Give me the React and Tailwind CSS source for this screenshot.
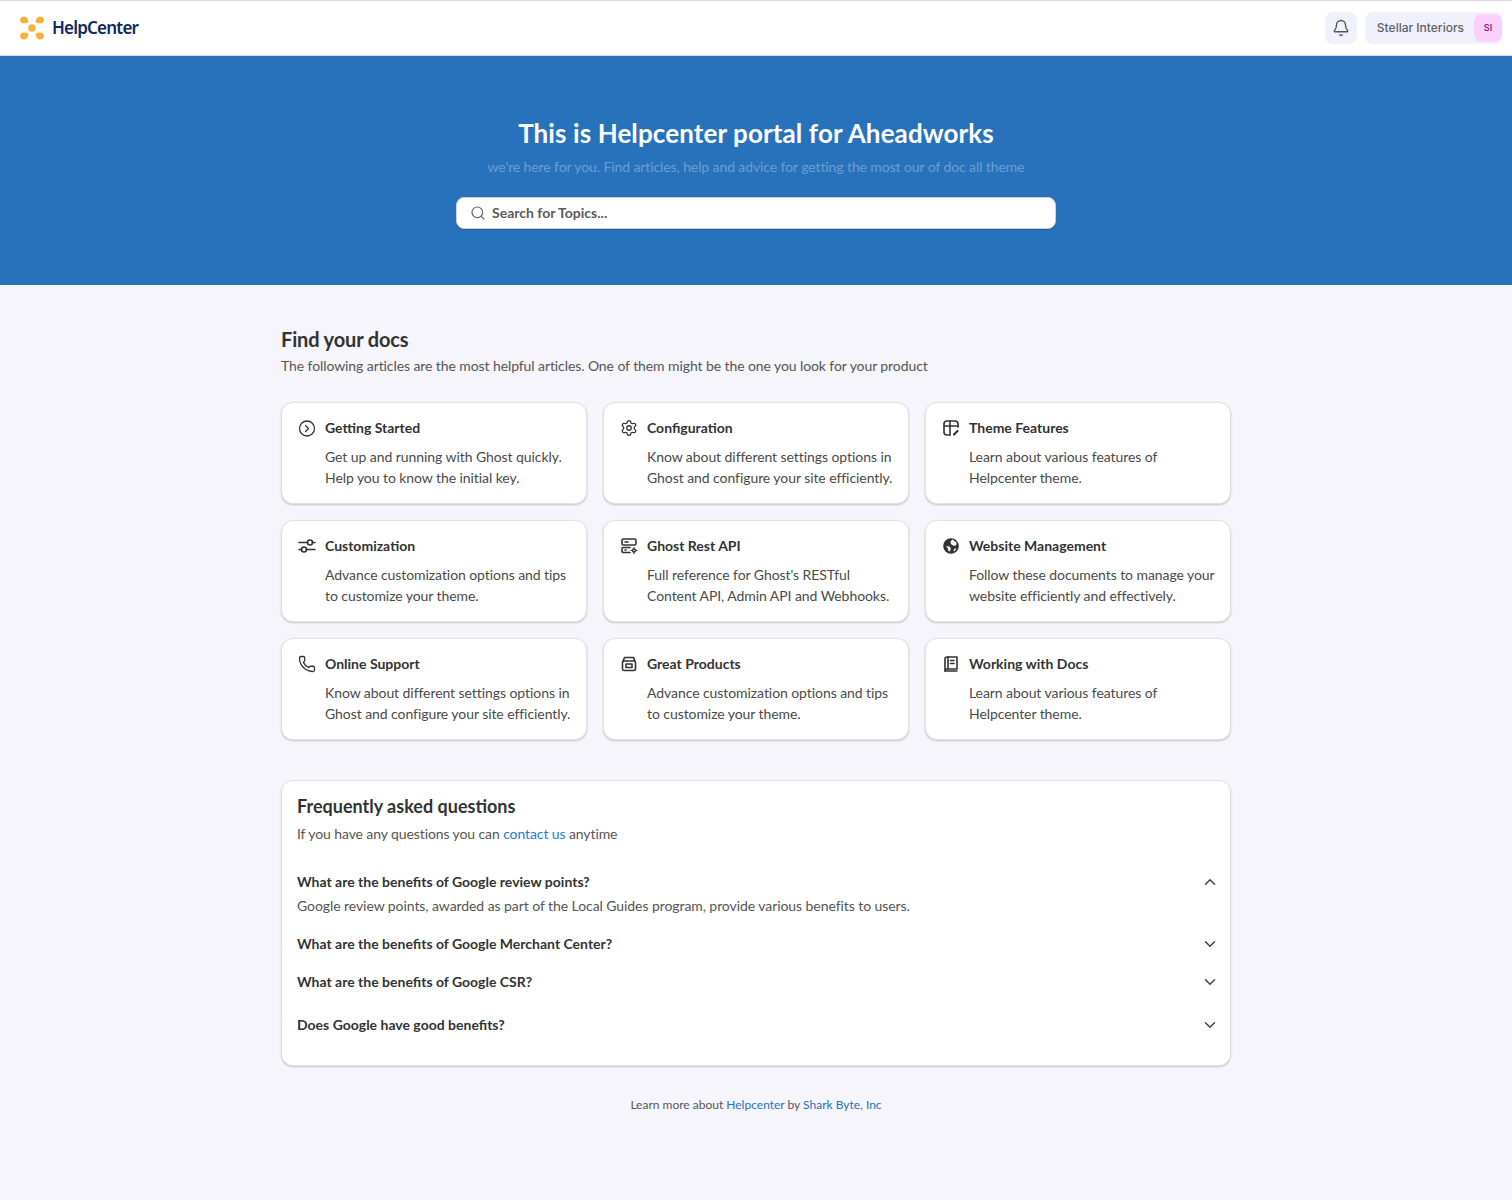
import React from "react";
import { Bell, ChevronDown, ChevronUp, CircleChevronRight, Search, Settings, Phone } from "lucide-react";

const IconBase = ({ children }) => (
  <svg width="18" height="18" viewBox="0 0 18 18" fill="none" stroke="currentColor" strokeWidth="1.6" strokeLinecap="round" strokeLinejoin="round">
    {children}
  </svg>
);

const ThemeIcon = () => (
  <IconBase>
    <path d="M16 8V5a3 3 0 0 0-3-3H5a3 3 0 0 0-3 3v8a3 3 0 0 0 3 3h3" />
    <path d="M2 7h14M8 2v14" />
    <path d="M12 15.500l3.500-3.500" strokeWidth="2.200" />
  </IconBase>
);

const SlidersIcon = () => (
  <IconBase>
    <path d="M1 5.500h8.500M14.500 5.500H17M1 12.500h2.500M8.500 12.500H17" />
    <circle cx="12" cy="5.500" r="2.500" />
    <circle cx="6" cy="12.500" r="2.500" />
  </IconBase>
);

const ServerIcon = () => (
  <IconBase>
    <rect x="2" y="2" width="14" height="6" rx="1.500" />
    <path d="M10 10.500H3.500A1.500 1.500 0 0 0 2 12v2a1.500 1.500 0 0 0 1.500 1.500H10" />
    <path d="M5 5h3M5 13h1" />
    <circle cx="14" cy="13.500" r="1.500" strokeWidth="1.400" />
    <path d="M14 10.500v1M14 15.500v1M11 13.500h1M16 13.500h1" strokeWidth="1.200" />
  </IconBase>
);

const GlobeIcon = () => (
  <svg width="18" height="18" viewBox="0 0 18 18">
    <circle cx="9" cy="9" r="7.800" fill="#333" />
    <path fill="#fff" d="M10.500 2.500 14.500 5.500 14 8.500 11.500 8.800 9 7 8.500 4.500Z" />
    <path fill="#fff" d="M4 9 7.500 9.500 9 11.500 7.500 14.500 6.200 13.500 5.800 11Z" />
    <path fill="#fff" d="M12.500 11.500 14.500 11.800 12 14.500 11.500 13.500Z" />
  </svg>
);

const BagIcon = () => (
  <IconBase>
    <path d="M3 6.500 4.500 2.500h9L15 6.500" />
    <rect x="2.500" y="6" width="13" height="9.500" rx="1.500" />
    <rect x="6" y="9" width="6" height="3.500" />
  </IconBase>
);

const BookIcon = () => (
  <IconBase>
    <path d="M5 2h10v12H5a2 2 0 0 0-2 2V4a2 2 0 0 1 2-2Z" />
    <path d="M3 16h12M8.500 5.500h3.500M8.500 8.500h3.500" />
    <path d="M6 2v12" />
  </IconBase>
);

const Logo = () => (
  <svg width="24" height="24" viewBox="0 0 24 24" fill="#fbb03b">
    <circle cx="12" cy="12" r="3.800" />
    <path d="M0 4.500A4 4 0 0 1 4 .500C6.500.500 8 2.500 8.500 6 5.500 8.500 0 7.500 0 4.500Z" />
    <path d="M24 4.500A4 4 0 0 0 20 .500C17.500.500 16 2.500 15.500 6 18.500 8.500 24 7.500 24 4.500Z" />
    <path d="M0 19.500A4 4 0 0 0 4 23.500C6.500 23.500 8 21.500 8.500 18 5.500 15.500 0 16.500 0 19.500Z" />
    <path d="M24 19.500a4 4 0 0 1-4 4c-2.500 0-4-2-4.500-5.500 3-2.500 8.500-1.500 8.500 1.500Z" />
  </svg>
);

const docs = [
  { title: "Getting Started", icon: <CircleChevronRight size={19} strokeWidth={1.7} />, lines: ["Get up and running with Ghost quickly.", "Help you to know the initial key."] },
  { title: "Configuration", icon: <Settings size={18} strokeWidth={1.7} />, lines: ["Know about different settings options in", "Ghost and configure your site efficiently."] },
  { title: "Theme Features", icon: <ThemeIcon />, lines: ["Learn about various features of", "Helpcenter theme."] },
  { title: "Customization", icon: <SlidersIcon />, lines: ["Advance customization options and tips", "to customize your theme."] },
  { title: "Ghost Rest API", icon: <ServerIcon />, lines: ["Full reference for Ghost's RESTful", "Content API, Admin API and Webhooks."] },
  { title: "Website Management", icon: <GlobeIcon />, lines: ["Follow these documents to manage your", "website efficiently and effectively."] },
  { title: "Online Support", icon: <Phone size={18} strokeWidth={1.7} />, lines: ["Know about different settings options in", "Ghost and configure your site efficiently."] },
  { title: "Great Products", icon: <BagIcon />, lines: ["Advance customization options and tips", "to customize your theme."] },
  { title: "Working with Docs", icon: <BookIcon />, lines: ["Learn about various features of", "Helpcenter theme."] },
];

const DocCard = ({ doc }) => (
  <div className="h-[102px] rounded-xl border border-[#e2e2e6] bg-white pl-4 pr-2 pt-[15px] shadow-[0_1px_2px_rgba(0,0,0,0.2)]">
    <div className="flex h-5 items-center gap-[9px] text-[#333]">
      <span className="flex w-[18px] justify-center">{doc.icon}</span>
      <h3 className="text-sm font-bold text-[#333]">{doc.title}</h3>
    </div>
    <div className="mt-2 pl-[27px] text-sm leading-[21px] tracking-[-0.07px] text-[#4a4a4a]">
      {doc.lines.map((l) => (
        <p key={l} className="whitespace-nowrap">{l}</p>
      ))}
    </div>
  </div>
);

const FaqRow = ({ q, open, className }) => (
  <div className={`flex items-center justify-between pr-[11px] ${className}`}>
    <span className="text-sm font-bold text-[#333]">{q}</span>
    {open ? <ChevronUp size={18} strokeWidth={2} className="text-[#444]" /> : <ChevronDown size={18} strokeWidth={2} className="text-[#444]" />}
  </div>
);

export default function App() {
  return (
    <div className="min-h-[1200px] bg-[#f5f5fb] font-['Lato',sans-serif]">
      <header className="flex h-14 items-center justify-between border-y border-[#d8d8d8] bg-white pl-5 pr-[9px]">
        <div className="flex items-center gap-2">
          <Logo />
          <span className="font-['Noto_Sans',sans-serif] text-[17px] font-semibold tracking-[-0.8px] text-[#0f2a5f]">HelpCenter</span>
        </div>
        <div className="flex items-center gap-2">
          <button className="flex h-8 w-8 items-center justify-center rounded-lg bg-[#f0f1fb] text-[#555]">
            <Bell size={18} strokeWidth={1.8} />
          </button>
          <div className="flex h-8 items-center gap-[10px] rounded-lg bg-[#f0f1fb] pl-3 pr-px font-['Inter',sans-serif]">
            <span className="text-xs font-medium text-[#5f5f68]">Stellar Interiors</span>
            <span className="flex h-7 w-7 items-center justify-center rounded-lg bg-[#fbd0fa] text-[9px] font-semibold text-[#8a1f8a]">SI</span>
          </div>
        </div>
      </header>

      <section className="flex h-[229px] flex-col items-center bg-[#2872bb] pt-[59px]">
        <h1 className="text-[26px] font-bold leading-9 tracking-[0.1px] text-white">This is Helpcenter portal for Aheadworks</h1>
        <p className="mt-[6px] text-sm leading-5 tracking-[-0.1px] text-[#6c9fd3]">we're here for you. Find articles, help and advice for getting the most our of doc all theme</p>
        <div className="mt-5 flex h-8 w-[600px] items-center gap-[6px] rounded-lg border border-[#d0d0d0] bg-white pl-[13px] shadow-[0_1px_1px_rgba(0,0,0,0.15)]">
          <Search size={16} strokeWidth={1.8} className="text-[#666]" />
          <span className="text-sm font-bold text-[#5b5b5b]">Search for Topics...</span>
        </div>
      </section>

      <main className="mx-auto w-[950px] pt-10">
        <h2 className="text-xl font-bold leading-7 tracking-[-0.15px] text-[#333]">Find your docs</h2>
        <p className="mt-[3px] text-sm leading-5 tracking-[-0.09px] text-[#555]">The following articles are the most helpful articles. One of them might be the one you look for your product</p>

        <div className="mt-[26px] grid grid-cols-3 gap-4">
          {docs.map((d) => (
            <DocCard key={d.title} doc={d} />
          ))}
        </div>

        <section className="mt-10 h-[286px] rounded-xl border border-[#e2e2e6] bg-white pl-[15px] pt-[11px] shadow-[0_1px_2px_rgba(0,0,0,0.2)]">
          <h2 className="text-lg font-bold leading-7 text-[#333]">Frequently asked questions</h2>
          <p className="mt-1 text-sm leading-5 tracking-[-0.1px] text-[#555]">
            If you have any questions you can <span className="text-[#1c7ed6]">contact us</span> anytime
          </p>
          <FaqRow q="What are the benefits of Google review points?" open className="mt-7 h-5" />
          <p className="mt-1 text-sm leading-5 tracking-[-0.07px] text-[#555]">Google review points, awarded as part of the Local Guides program, provide various benefits to users.</p>
          <FaqRow q="What are the benefits of Google Merchant Center?" className="mt-[18px] h-5" />
          <FaqRow q="What are the benefits of Google CSR?" className="mt-[18px] h-5" />
          <FaqRow q="Does Google have good benefits?" className="mt-[23px] h-5" />
        </section>

        <p className="mt-[29px] text-center text-xs leading-5 text-[#555]">
          Learn more about <span className="text-[#2872bb]">Helpcenter</span> by <span className="text-[#2872bb]">Shark Byte, Inc</span>
        </p>
      </main>
    </div>
  );
}
